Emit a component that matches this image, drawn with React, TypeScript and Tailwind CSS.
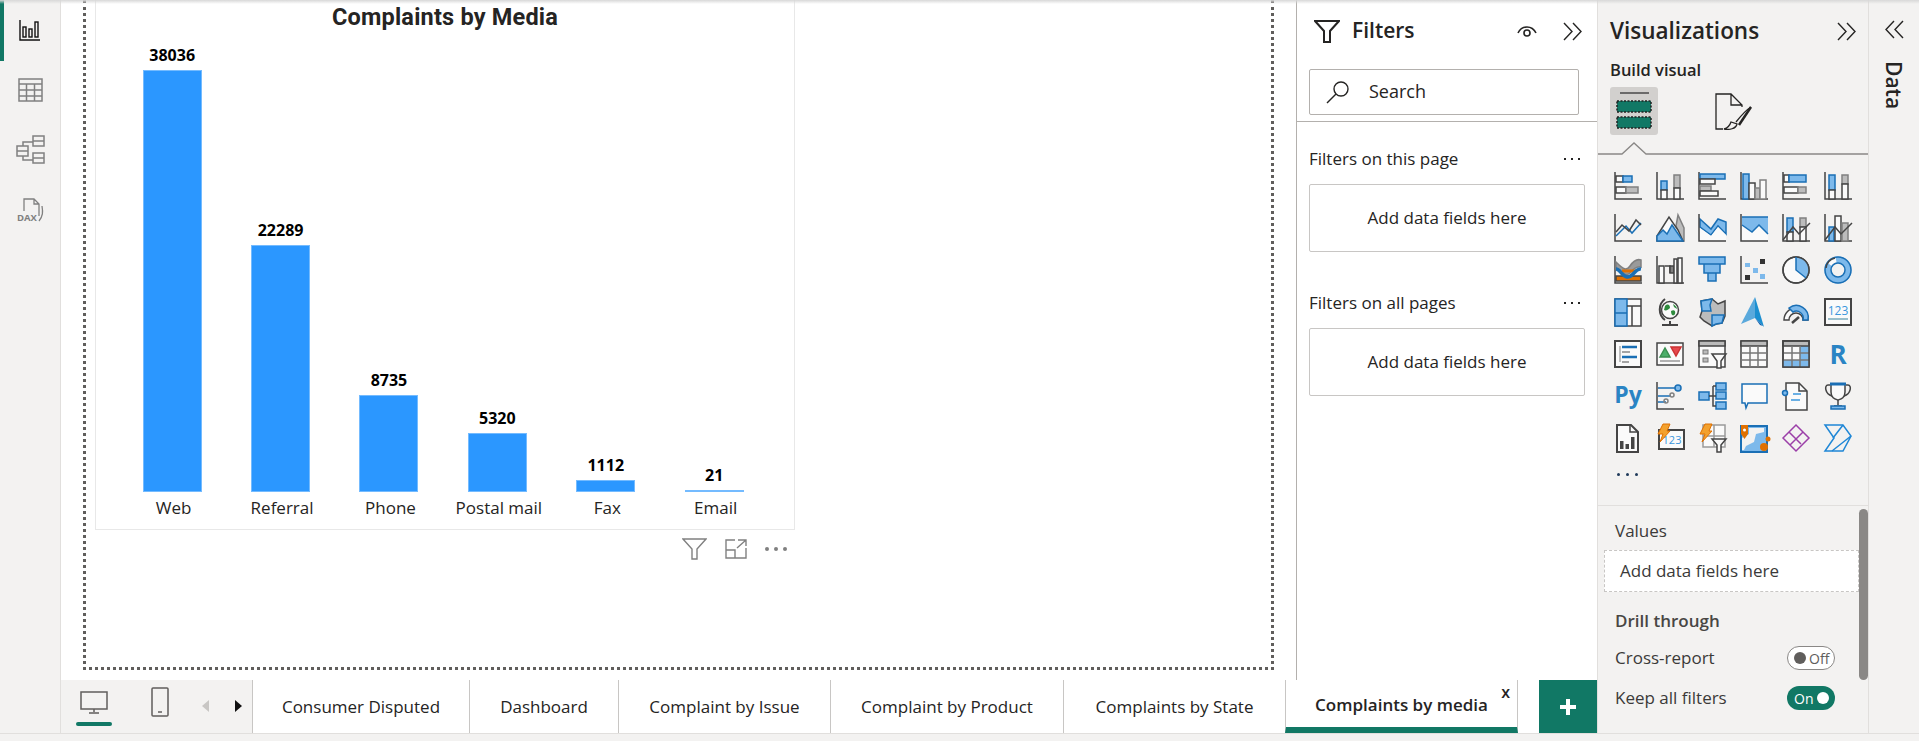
import React from "react";

const D = "#444";
const B = "#1a6fb5";
const L = "#7db9eb";
const G = "#bcbcbc";
const W = "#fafafa";
const O = "#e07000";

function V({ children }: { children: React.ReactNode }) {
  return (
    <svg width="28" height="28" viewBox="0 0 28 28" fill="none" strokeWidth="1.5" stroke={D} className="block overflow-visible">
      {children}
    </svg>
  );
}
const Axis = () => <path d="M1 0V27H28" stroke={D} strokeWidth="1.5" />;
const R = ({ x, y, w, h, f, s }: { x: number; y: number; w: number; h: number; f: string; s: string }) => (
  <rect x={x} y={y} width={w} height={h} fill={f} stroke={s} strokeWidth="1.5" />
);

const icons: React.ReactNode[] = [
  <><Axis /><R x={2} y={4} w={7} h={6} f={W} s={D} /><R x={9} y={4} w={9} h={6} f={L} s={B} /><R x={2} y={15} w={10} h={6} f={W} s={D} /><R x={12} y={15} w={12} h={6} f={G} s="#808080" /></>,
  <><Axis /><R x={5} y={9} w={6} h={9} f={L} s={B} /><R x={5} y={18} w={6} h={9} f={W} s={D} /><R x={18} y={3} w={6} h={13} f={G} s="#808080" /><R x={18} y={16} w={6} h={11} f={W} s={D} /></>,
  <><Axis /><R x={2} y={2} w={25} h={5} f={L} s={B} /><R x={2} y={7} w={15} h={5} f={W} s={D} /><R x={2} y={14} w={11} h={5} f={G} s="#808080" /><R x={2} y={19} w={18} h={5} f={W} s={D} /></>,
  <><Axis /><R x={3} y={2} w={6} h={25} f={L} s={B} /><R x={9} y={11} w={6} h={16} f={W} s={D} /><R x={15} y={16} w={5} h={11} f={G} s="#808080" /><R x={20} y={8} w={6} h={19} f={W} s="#808080" /></>,
  <><Axis /><R x={2} y={3} w={5} h={7} f={W} s={D} /><R x={7} y={3} w={17} h={7} f={L} s={B} /><R x={2} y={15} w={14} h={6} f={W} s={D} /><R x={16} y={15} w={8} h={6} f={G} s="#808080" /></>,
  <><Axis /><R x={5} y={3} w={6} h={15} f={L} s={B} /><R x={5} y={18} w={6} h={9} f={W} s={D} /><R x={18} y={3} w={6} h={9} f={G} s="#808080" /><R x={18} y={12} w={6} h={15} f={W} s={D} /></>,

  <><Axis /><path d="M2 22L12 12L18 19L27 9" stroke={B} /><path d="M2 18L8 11L15 17L22 6L27 11" stroke={D} /></>,
  <><path d="M20 12L22 1L28 14V27H26Z" fill={G} stroke="#808080" /><path d="M1 22L13 3L22 16L27 27H1Z" fill={W} stroke={D} /><path d="M1 27V22L7 16L11 20L16 11L27 27Z" fill={L} stroke={B} /></>,
  <><path d="M2 5L13 15L20 5L28 8V20L20 12L13 21L2 13Z" fill={L} stroke={B} /><path d="M2 14L13 22L20 13L28 21V27H2Z" fill={W} stroke="none" /><path d="M1 0V27H28" /></>,
  <><path d="M2 3H28V20L19 11L12 18L2 11Z" fill={L} stroke="none" /><path d="M2 11L12 18L19 11L28 20V27H2Z" fill={W} stroke="none" /><path d="M2 3H28M2 11L12 18L19 11L28 20" stroke={B} /><Axis /></>,
  <><Axis /><R x={5} y={4} w={6} h={14} f={L} s={B} /><R x={5} y={18} w={6} h={9} f={W} s={D} /><R x={18} y={4} w={6} h={9} f={G} s="#808080" /><R x={18} y={13} w={6} h={14} f={W} s={D} /><path d="M1 26L11 13L17 20L28 9" stroke={D} /></>,
  <><Axis /><R x={5} y={13} w={5} h={14} f={L} s={B} /><R x={11} y={2} w={6} h={25} f={W} s={D} /><R x={18} y={9} w={6} h={18} f={G} s="#808080" /><path d="M1 26L11 13L17 20L28 9" stroke={D} /></>,

  <><Axis /><path d="M2 6C8 12 12 16 16 10C20 4 24 3 27 4V11C24 10 20 12 16 17C12 21 7 16 2 13Z" fill="#9a9a9a" stroke="#808080" /><path d="M2 20H27V25H2Z" fill={O} /><path d="M8 15H22" stroke={O} strokeWidth="3" /><path d="M2 13C6 13 8 20 13 21C19 22 21 12 27 13" stroke={B} strokeWidth="3.5" /></>,
  <><Axis /><R x={3} y={10} w={5} h={17} f={W} s={D} /><path d="M9 10H14V17" stroke={D} /><R x={14} y={10} w={4} h={7} f="#808080" s={D} /><R x={18} y={3} w={3} h={24} f={W} s={D} /><R x={22} y={2} w={4} h={25} f={W} s={D} /></>,
  <><path d="M1 1H27V8H22V17H18V25H10V17H6V8H1Z" fill={L} stroke="none" /><path d="M1 1H27V8H1ZM6 8V17H22V8M10 17V25H18V17" stroke={B} /></>,
  <><Axis /><rect x="5" y="7" width="5" height="4" fill={L} stroke="none" /><rect x="13" y="12" width="5" height="5" fill={L} stroke="none" /><rect x="20" y="18" width="5" height="5" fill={L} stroke="none" /><rect x="20" y="3" width="5" height="5" fill="#333" stroke="none" /><rect x="5" y="19" width="5" height="5" fill="#333" stroke="none" /></>,
  <><circle cx="14" cy="14" r="13" fill={W} /><path d="M14 1A13 13 0 0 1 24 22L14 14Z" fill={L} stroke="none" /><circle cx="14" cy="14" r="13" /><path d="M14 1V14L24 22" stroke={B} /></>,
  <><circle cx="14" cy="14" r="10" stroke={L} strokeWidth="7" /><path d="M5 8A11 11 0 0 1 12 3.5" stroke={W} strokeWidth="6" /><circle cx="14" cy="14" r="13" stroke={B} /><circle cx="14" cy="14" r="7" stroke={B} fill="#f3f2f1" /><path d="M2 12A12 12 0 0 1 11 2" stroke={D} /></>,

  <><rect x="1" y="1" width="26" height="27" fill={W} stroke={D} /><rect x="1" y="1" width="12" height="27" fill={L} stroke={B} /><path d="M1 15H13" stroke={B} /><path d="M13 8H27M18 8V28" stroke={D} /></>,
  <><circle cx="14" cy="12" r="8.5" fill={W} stroke={D} /><path d="M9 8C12 5 14 7 14 10C12 12 10 13 8 12ZM15 13C18 11 20 13 19 16C17 19 15 17 15 13ZM17 6C19 7 21 9 21 11L18 9Z" fill="#2e8b3d" stroke="none" /><path d="M9 1C2 6 2 17 9 22M14 23V26M6 27H22" stroke={D} strokeWidth="2" /></>,
  <><path d="M3 3L14 1L20 6L27 3V18L24 25L18 26L14 28L6 23L2 19L4 13Z" fill={G} stroke={D} /><path d="M3 3L14 1L12 7L13 13H4Z" fill={L} stroke={B} /><path d="M14 17H26L24 25L18 26L14 28Z" fill={L} stroke={B} /></>,
  <><path d="M15 -1L1 26L15 20Z" fill="#5aa9dc" stroke="none" /><path d="M15 -1L15 20L24 29Z" fill="#1c8fd0" stroke="none" /><path d="M15 20L20 27L23 28Z" fill="#0c5fb0" stroke="none" /></>,
  <><path d="M2 22A12 12 0 0 1 26 22H21A7 7 0 0 0 7 22Z" fill={W} stroke={D} /><path d="M7 10A12 12 0 0 1 26 22H21A7 7 0 0 0 11 14Z" fill={L} stroke={B} /><path d="M10 25L17 19" stroke={D} strokeWidth="2.5" /></>,
  <><rect x="1" y="1" width="26" height="26" fill={W} stroke={D} strokeWidth="2" /><text x="14" y="17" textAnchor="middle" fontSize="12" fill="#3a96dd" stroke="none" fontFamily="Open Sans, sans-serif">123</text><path d="M4 21H24" stroke="#7ab" /></>,

  <><rect x="1" y="1" width="26" height="26" fill={W} stroke={D} strokeWidth="2" /><path d="M6 6V22" stroke="#aaa" /><path d="M8 7H23M8 17H23" stroke={B} strokeWidth="2.5" /><path d="M8 12H16M8 22H15" stroke="#888" /></>,
  <><rect x="1" y="3" width="26" height="22" fill={W} stroke={D} strokeWidth="1.5" /><path d="M4 17L9 8L14 17Z" fill="#4caf6a" stroke="#3a8f50" /><path d="M15 7H25L20 16Z" fill="#e5484d" stroke="#c33" /><path d="M4 21H24" stroke="#999" /></>,
  <><rect x="1" y="1" width="26" height="26" fill={W} stroke={D} /><rect x="1" y="1" width="26" height="5" fill="#bbb" stroke={D} /><rect x="5" y="10" width="5" height="4" fill="#bbb" stroke="#777" strokeWidth="1" /><rect x="5" y="18" width="5" height="4" fill="#bbb" stroke="#777" strokeWidth="1" /><path d="M14 14H28L23 21V28H19V21Z" fill={W} stroke={D} strokeWidth="1.5" /></>,
  <><rect x="1" y="1" width="26" height="26" fill={W} stroke={D} /><rect x="1" y="1" width="26" height="5" fill="#bbb" stroke={D} /><path d="M1 13H27M1 20H27M10 6V27M18 6V27" stroke="#777" /></>,
  <><rect x="1" y="1" width="26" height="26" fill={W} stroke={D} /><rect x="18" y="6" width="9" height="21" fill={L} stroke="none" /><rect x="1" y="20" width="26" height="7" fill={L} stroke="none" /><rect x="1" y="1" width="26" height="5" fill="#bbb" stroke={D} /><path d="M1 13H27M1 20H27M10 6V27M18 6V27" stroke="#777" /><rect x="1" y="1" width="26" height="26" stroke={D} /></>,
  <text x="14" y="24" textAnchor="middle" fontSize="26" fontWeight="700" fill="#2a84c4" stroke="none" fontFamily="Open Sans, sans-serif">R</text>,

  <text x="14" y="21" textAnchor="middle" fontSize="23" fontWeight="700" fill="#2a84c4" stroke="none" fontFamily="Open Sans, sans-serif">Py</text>,
  <><Axis /><path d="M2 6H20M2 14H15M2 20H10" stroke={B} /><circle cx="22" cy="6" r="3" fill={L} stroke={B} /><circle cx="16" cy="13" r="2" stroke="#808080" /><circle cx="10" cy="19" r="2" stroke="#808080" /></>,
  <><rect x="1" y="10" width="10" height="8" fill={L} stroke={B} /><rect x="18" y="1" width="10" height="7" fill={L} stroke={B} /><rect x="18" y="10" width="10" height="7" fill={L} stroke={B} /><rect x="18" y="20" width="10" height="7" fill={L} stroke={B} /><path d="M11 14H18M15 4V24H18M15 4H18" stroke={D} /></>,
  <path d="M2 2H27V21H8L6 26L5 21H2Z" fill={W} stroke={B} />,
  <><path d="M4 1H17L25 9V28H4Z" fill={W} stroke={D} /><path d="M17 1V9H25" stroke={D} /><path d="M11 12H19M9 18H18" stroke="#3a96dd" /><circle cx="3" cy="11" r="2.5" fill={L} stroke={B} /></>,
  <><path d="M6 3H4C0 3 1 12 8 14M22 3H24C28 3 27 12 20 14" stroke={D} /><path d="M7 2H21V10C21 16 17 17 14 18C11 17 7 16 7 10Z" fill={W} stroke={D} /><path d="M6 2H22" stroke={B} strokeWidth="3" /><path d="M14 18V23M10 24H18" stroke={D} /><rect x="7" y="24" width="14" height="3" fill={L} stroke={B} /></>,

  <><path d="M5 1H17L24 8V28H3V1Z" fill={W} stroke={D} strokeWidth="2" /><path d="M16 1V8H24" stroke={D} /><rect x="6" y="17" width="3.5" height="8" fill={D} stroke="none" /><rect x="11.5" y="20" width="3.5" height="5" fill={D} stroke="none" /><rect x="17" y="13" width="3.5" height="12" fill={D} stroke="none" /></>,
  <><rect x="3" y="6" width="25" height="19" fill={W} stroke={D} strokeWidth="2" /><text x="16" y="20" textAnchor="middle" fontSize="11" fill="#3a96dd" stroke="none" fontFamily="Open Sans, sans-serif">123</text><path d="M7 0H14L11 7H14L4 18L7 10H2Z" fill="#f3a12e" stroke={O} strokeWidth="1" /></>,
  <><rect x="5" y="1" width="22" height="22" fill={W} stroke="#9a9a9a" /><path d="M16 1V23M5 12H27" stroke="#9a9a9a" /><path d="M14 15H28L23 21V28H19V21Z" fill={W} stroke={D} /><path d="M7 0H14L11 7H14L4 18L7 10H2Z" fill="#f3a12e" stroke={O} strokeWidth="1" /></>,
  <><rect x="1" y="2" width="26" height="26" fill={L} stroke={B} strokeWidth="2" /><path d="M9 4H24V8L16 10L14 18L6 22L4 26H2V14L9 10Z" fill="#f3f2f1" stroke="none" /><path d="M1 1H8V10L4.5 15L1 10Z" fill={O} stroke="none" /><circle cx="4.5" cy="6" r="1.5" fill="#fff" stroke="none" /><circle cx="28" cy="15" r="2.5" fill={O} stroke="none" /><circle cx="24" cy="23" r="4" fill={O} stroke="none" /></>,
  <path d="M1 14L14 1L27 14L14 27ZM7 8L19 20M21 8L8 21" stroke="#9b3fa8" strokeWidth="1.5" />,
  <><path d="M1 1H19L27 12L19 27H1L10 14Z" fill="#f3f2f1" stroke="#1f87d6" /><path d="M19 1L9 14M27 12L8 27" stroke="#1f87d6" /></>,
];

function Chevrons({ left = false, className = "" }: { left?: boolean; className?: string }) {
  return (
    <svg width="19" height="19" viewBox="0 0 19 19" fill="none" stroke="#252423" strokeWidth="1.4" className={className}>
      {left ? <path d="M9 1L1 9.5L9 18M18 1L10 9.5L18 18" /> : <path d="M1 1L9 9.5L1 18M10 1L18 9.5L10 18" />}
    </svg>
  );
}

function Dots() {
  return (
    <div className="flex gap-[5px]">
      {[0, 1, 2].map((i) => (
        <span key={i} className="w-[2px] h-[2px] bg-[#252423]" />
      ))}
    </div>
  );
}

const bars = [
  { n: "Web", v: 38036 },
  { n: "Referral", v: 22289 },
  { n: "Phone", v: 8735 },
  { n: "Postal mail", v: 5320 },
  { n: "Fax", v: 1112 },
  { n: "Email", v: 21 },
];

function Rail() {
  return (
    <div className="w-[61px] shrink-0 bg-[#f3f2f1] border-r border-[#e1dfdd] flex flex-col">
      <div className="h-[61px] border-l-4 border-[#117865] flex items-center justify-center pr-[4px] pb-[1px]">
        <svg width="22" height="22" viewBox="0 0 22 22" fill="none" stroke="#111" strokeWidth="1.4">
          <path d="M1 1V21H21" />
          <rect x="4" y="8" width="3" height="10" />
          <rect x="10" y="10" width="3" height="8" />
          <rect x="16" y="3" width="3" height="15" />
        </svg>
      </div>
      <div className="h-[58px] flex items-center justify-center">
        <svg width="25" height="24" viewBox="0 0 25 24" fill="none" stroke="#808080" strokeWidth="1.5">
          <rect x="1" y="1" width="23" height="22" />
          <path d="M1 6H24M1 12H24M1 18H24M8.5 6V23M16.5 6V23" />
        </svg>
      </div>
      <div className="h-[60px] flex items-center justify-center">
        <svg width="29" height="29" viewBox="0 0 29 29" fill="none" stroke="#808080" strokeWidth="1.5">
          <rect x="1" y="11" width="11" height="10" />
          <path d="M1 16H12" />
          <rect x="17" y="1" width="11" height="10" />
          <path d="M17 6H28" />
          <rect x="17" y="18" width="11" height="10" />
          <path d="M17 23H28M7 11V7H17M7 21V25H17" />
        </svg>
      </div>
      <div className="h-[64px] flex items-center justify-center">
        <svg width="27" height="26" viewBox="0 0 27 26" fill="none" stroke="#808080" strokeWidth="1.3">
          <path d="M7 13V1H17L22 6V18M17 1V6H22M25 8C26 14 26 18 22 23" />
          <text x="0" y="23" fontSize="9.5" fontWeight="700" fill="#808080" stroke="none" fontFamily="Open Sans, sans-serif">DAX</text>
        </svg>
      </div>
    </div>
  );
}

function Canvas() {
  return (
    <div className="flex-1 min-w-0 bg-white border-r border-[#b3b0ad] pl-[22px] pr-[22px] pb-[10px]">
      <div className="h-full border-l-[3px] border-r-[3px] border-b-[3px] border-dotted border-[#605e5c] pl-[9px]">
        <div className="w-[700px] h-[530px] border-r border-b border-l border-[#e8e8e8] flex flex-col">
          <div className="h-[30px] pt-[2px] text-center text-[23.5px] leading-[30px] font-bold text-[#252423] font-['Liberation_Sans_Narrow','Roboto',sans-serif] tracking-[0.2px]">
            Complaints by Media
          </div>
          <div className="flex-1 flex items-end pl-[22px]">
            {bars.map((b) => (
              <div key={b.n} className="w-[108.4px] flex flex-col items-center">
                <div className="text-[16px] leading-[20px] font-bold text-black mb-[5px]">{b.v}</div>
                <div
                  className="w-[59px] bg-[#2b97ff] border border-[#74bbff]"
                  style={{ height: Math.max(2, Math.round((b.v * 422) / 38036)) }}
                />
                <div className="h-[37px] pt-[4px] pl-[3px] text-[17px] leading-[24px] text-[#252423] whitespace-nowrap">{b.n}</div>
              </div>
            ))}
          </div>
        </div>
        <div className="w-[700px] flex items-center justify-end gap-[18px] pr-[8px] pt-[8px]">
          <svg width="25" height="22" viewBox="0 0 25 22" fill="none" stroke="#808080" strokeWidth="1.4">
            <path d="M1 1H24L15 11V21H10V11Z" />
          </svg>
          <svg width="22" height="20" viewBox="0 0 22 20" fill="none" stroke="#808080" strokeWidth="1.4">
            <path d="M10 1H1V19H21V9M13 1H21V7M21 1L12 9M1 11H10V19" />
          </svg>
          <div className="w-[22px] flex justify-center">
            <div className="flex gap-[5px]">
              {[0, 1, 2].map((i) => (
                <span key={i} className="w-[4px] h-[4px] rounded-full bg-[#808080]" />
              ))}
            </div>
          </div>
        </div>
      </div>
    </div>
  );
}

function FilterGroup({ title }: { title: string }) {
  return (
    <div className="h-[118px] flex flex-col">
      <div className="flex items-center justify-between h-[26px] pr-[17px] text-[17px] text-[#252423]">
        <span>{title}</span>
        <Dots />
      </div>
      <div className="mt-[12px] h-[68px] w-[276px] border border-[#c8c6c4] rounded-[2px] flex items-center justify-center text-[17px] text-[#252423]">
        Add data fields here
      </div>
    </div>
  );
}

function Filters() {
  return (
    <div className="w-[300px] shrink-0 bg-white flex flex-col">
      <div className="h-[69px] flex items-center pl-[17px] pr-[15px] pb-[7px]">
        <svg width="26" height="23" viewBox="0 0 26 23" fill="none" stroke="#252423" strokeWidth="2">
          <path d="M1 1H25L16 11V22H10V11Z" />
        </svg>
        <span className="ml-[12px] text-[21px] font-semibold text-[#252423]">Filters</span>
        <span className="ml-auto mr-[26px]">
          <svg width="20" height="14" viewBox="0 0 20 14" fill="none" stroke="#252423" strokeWidth="1.6">
            <path d="M1 9C5 1 15 1 19 9" />
            <circle cx="10" cy="9" r="3" />
          </svg>
        </span>
        <Chevrons />
      </div>
      <div className="pl-[12px]">
        <div className="w-[270px] h-[46px] border border-[#b3b0ad] rounded-[2px] flex items-center pl-[16px] pb-[1px]">
          <svg width="24" height="24" viewBox="0 0 24 24" fill="none" stroke="#252423" strokeWidth="1.4">
            <circle cx="15" cy="9" r="7" />
            <path d="M10 14L1 23" />
          </svg>
          <span className="ml-[19px] text-[18px] text-[#252423]">Search</span>
        </div>
      </div>
      <div className="mt-[6px] border-t border-[#b3b0ad]" />
      <div className="pl-[12px] pt-[24px] flex flex-col gap-[26px]">
        <FilterGroup title="Filters on this page" />
        <FilterGroup title="Filters on all pages" />
      </div>
    </div>
  );
}

function Viz() {
  return (
    <div className="w-[272px] shrink-0 h-full bg-[#f3f2f1] border-l border-r border-[#e1dfdd] flex flex-col">
      <div className="h-[60px] flex items-center justify-between pl-[12px] pr-[12px] pt-[2px]">
        <span className="text-[22.5px] font-semibold text-[#252423]">Visualizations</span>
        <Chevrons />
      </div>
      <div className="pl-[12px] h-[27px] text-[16.5px] leading-[20px] font-semibold text-[#252423]">Build visual</div>
      <div className="pl-[12px] flex items-center gap-[57px]">
        <div className="w-[48px] h-[48px] bg-[#d2d0ce] rounded-[3px] flex items-center justify-center">
          <svg width="36" height="38" viewBox="0 0 36 38" fill="none">
            <path d="M4 1H33" stroke="#333" strokeWidth="1.3" />
            <rect x="1" y="9" width="34" height="11" fill="#117865" stroke="#222" strokeWidth="1.5" strokeDasharray="2 1.5" />
            <rect x="1" y="25" width="34" height="11" fill="#117865" stroke="#222" strokeWidth="1.5" strokeDasharray="2 1.5" />
          </svg>
        </div>
        <svg width="37" height="37" viewBox="0 0 37 37" fill="none" stroke="#252423" strokeWidth="1.3">
          <path d="M8 36H1V1H16L27 12V14M16 1V12H27" />
          <path d="M36 14C31 17 25 24 21 29M16 29C15 32 13 35 9 36C14 37 21 36 22 31Z" />
          <path d="M36 14L24 32" strokeWidth="2.5" />
        </svg>
      </div>
      <svg width="270" height="19" viewBox="0 0 270 19" fill="none" className="block mt-[1px]" stroke="#8a8886" strokeWidth="1.3">
        <path d="M0 18H24L36 7L48 18H270" />
      </svg>
      <div className="pl-[16px] pt-[17px] grid grid-cols-[repeat(6,28px)] gap-[14px]">
        {icons.map((ic, i) => (
          <V key={i}>{ic}</V>
        ))}
      </div>
      <div className="pl-[19px] mt-[21px] h-[5px]">
        <div className="flex gap-[6px]">
          {[0, 1, 2].map((i) => (
            <span key={i} className="w-[3px] h-[3px] rounded-full bg-[#1f3a5a]" />
          ))}
        </div>
      </div>
      <div className="mt-[27px] border-t border-[#e1dfdd] flex-1 flex min-h-0">
        <div className="flex-1 min-w-0 flex flex-col">
          <div className="pl-[17px] pt-[14px] h-[44px] text-[17px] leading-[22px] text-[#3b3a39]">Values</div>
          <div className="ml-[6px] h-[42px] border border-dashed border-[#c8c6c4] bg-white flex items-center pl-[15px] text-[17px] text-[#3b3a39]">
            Add data fields here
          </div>
          <div className="pl-[17px] pt-[17px] h-[47px] text-[17px] leading-[24px] font-semibold text-[#484644]">Drill through</div>
          <div className="pl-[17px] pr-[24px] h-[38px] flex items-center justify-between text-[17px] text-[#3b3a39]">
            <span>Cross-report</span>
            <div className="w-[48px] h-[24px] border border-[#8a8886] bg-white rounded-full flex items-center pl-[6px] gap-[3px] text-[14px] text-[#605e5c]">
              <span className="w-[12px] h-[12px] rounded-full bg-[#605e5c]" />
              Off
            </div>
          </div>
          <div className="pl-[17px] pr-[24px] h-[42px] flex items-center justify-between text-[17px] text-[#3b3a39]">
            <span>Keep all filters</span>
            <div className="w-[48px] h-[24px] bg-[#117865] rounded-full flex items-center justify-between pl-[7px] pr-[6px] text-[14px] text-white">
              On
              <span className="w-[12px] h-[12px] rounded-full bg-white" />
            </div>
          </div>
        </div>
        <div className="w-[9px] shrink-0 pt-[3px]">
          <div className="h-[171px] bg-[#8a8886] rounded-full" />
        </div>
      </div>
    </div>
  );
}

const tabs = [
  { t: "Consumer Disputed", w: "w-[217px]" },
  { t: "Dashboard", w: "w-[149px]" },
  { t: "Complaint by Issue", w: "w-[212px]" },
  { t: "Complaint by Product", w: "w-[233px]" },
  { t: "Complaints by State", w: "w-[222px]" },
];

function TabBar() {
  return (
    <div className="h-[53px] shrink-0 flex bg-white">
      <div className="w-[191px] shrink-0 bg-[#f3f2f1] flex items-start">
        <div className="ml-[15px] w-[36px] flex flex-col items-center pt-[11px]">
          <svg width="28" height="23" viewBox="0 0 28 23" fill="none" stroke="#605e5c" strokeWidth="1.5">
            <rect x="1" y="1" width="26" height="17" />
            <path d="M14 18V21M9 22H19" />
          </svg>
          <div className="mt-[8px] w-[36px] h-[4px] rounded-[2px] bg-[#117865]" />
        </div>
        <svg width="18" height="30" viewBox="0 0 18 30" fill="none" stroke="#605e5c" strokeWidth="1.5" className="ml-[39px] mt-[7px]">
          <rect x="1" y="1" width="16" height="28" rx="1" />
          <path d="M7 25H11" />
        </svg>
        <svg width="7" height="12" viewBox="0 0 7 12" className="ml-[33px] mt-[20px]">
          <path d="M7 0V12L0 6Z" fill="#c8c6c4" />
        </svg>
        <svg width="7" height="12" viewBox="0 0 7 12" className="ml-[26px] mt-[20px]">
          <path d="M0 0V12L7 6Z" fill="#111" />
        </svg>
      </div>
      {tabs.map((x) => (
        <div key={x.t} className={`${x.w} shrink-0 border-l border-[#c8c6c4] flex items-center justify-center pt-[1px] text-[17px] text-[#252423]`}>
          {x.t}
        </div>
      ))}
      <div className="w-[233px] shrink-0 border-l border-r border-[#c8c6c4] relative flex items-center justify-center border-b-[6px] border-b-[#117865] pt-[3px] text-[17px] font-semibold text-[#252423]">
        Complaints by media
        <span className="absolute right-[7px] top-[2px] text-[16px] leading-[20px] font-semibold text-[#252423]">x</span>
      </div>
      <div className="flex-1" />
      <div className="w-[58px] shrink-0 bg-[#117865] flex items-center justify-center">
        <svg width="16" height="16" viewBox="0 0 16 16">
          <path d="M6 0H10V6H16V10H10V16H6V10H0V6H6Z" fill="#fff" />
        </svg>
      </div>
    </div>
  );
}

export default function App() {
  return (
    <div className="w-[1919px] h-[741px] overflow-hidden relative flex flex-col bg-[#f3f2f1] font-['Open_Sans',sans-serif]">
      <div className="flex h-[733px]">
        <Rail />
        <div className="w-[1536px] shrink-0 flex flex-col">
          <div className="flex-1 min-h-0 flex">
            <Canvas />
            <Filters />
          </div>
          <TabBar />
        </div>
        <Viz />
        <div className="w-[50px] flex flex-col items-center pt-[20px]">
          <Chevrons left />
          <span className="mt-[22px] text-[21px] leading-[24px] font-semibold text-[#252423] [writing-mode:vertical-rl]">Data</span>
        </div>
      </div>
      <div className="h-[8px] border-t border-[#e1dfdd]" />
      <div className="absolute left-0 right-0 top-0 h-[4px] bg-gradient-to-b from-[#d8d8d8] to-transparent" />
    </div>
  );
}
